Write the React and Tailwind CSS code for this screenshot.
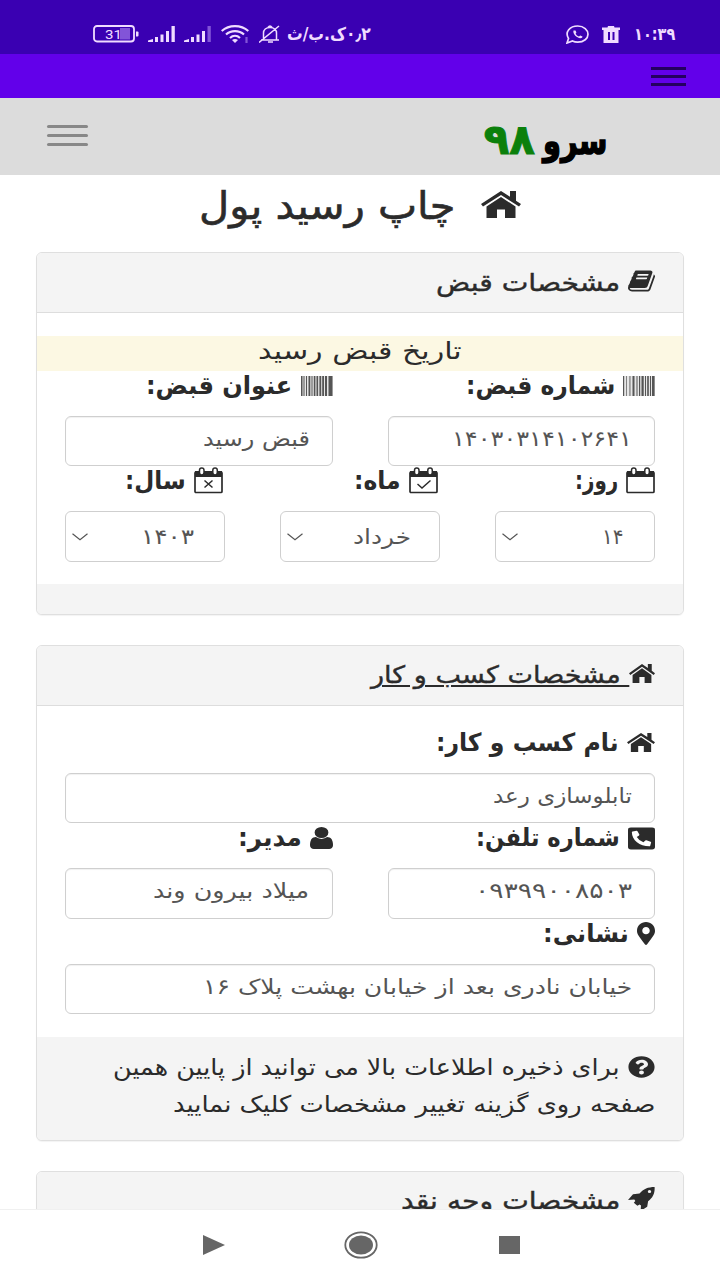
import { useLayoutEffect, useRef, useState } from "react";
import { FaHome, FaPhoneSquareAlt, FaMapMarkerAlt, FaQuestionCircle, FaWhatsapp } from "react-icons/fa";

/* One line of text, condensed or widened to a given measure. */
function Fit({ w, className = "", children }) {
  const ref = useRef(null);
  const [scale, setScale] = useState(1);
  useLayoutEffect(() => {
    setScale(w / ref.current.offsetWidth);
  }, [w]);
  return (
    <span className="block shrink-0" style={{ width: w }}>
      <span
        ref={ref}
        className={`block w-max origin-right whitespace-nowrap ${className}`}
        style={{ transform: `scaleX(${scale})` }}
      >
        {children}
      </span>
    </span>
  );
}

function Home({ className }) {
  return (
    <svg viewBox="0 0 40 27" preserveAspectRatio="none" fill="currentColor" className={className}>
      <path d="M20 0 0 13l2 2.500L20 4l18 11.500 2-2.500-5-3.300V0h-6v5.800z" />
      <path d="M20 6 5.500 15.500V27H16v-8.500h8V27h10.500V15.500z" />
    </svg>
  );
}

function Book({ className }) {
  return (
    <svg viewBox="0 100 1664 1600" preserveAspectRatio="none" fill="currentColor" className={className}>
      <path d="M1639 478q40 57 18 129l-275 906q-19 64-76.500 107.500T1183 1664H260q-77 0-148.500-53.500T12 1479q-24-67-2-127 0-4 3-27t4-37q1-8-3-21.500t-3-19.500q2-11 8-21t16.500-23.500T52 1179q23-38 45-91.500t30-91.500q3-10 .5-30t-.5-28q3-11 17-28t17-23q21-36 42-92t25-90q1-9-2.500-32t.5-28q4-13 22-30.500t22-22.500q19-26 42.500-84.500T340 411q1-8-3-25.500t-2-26.500q2-8 9-18t18-23 17-21q8-12 16.500-30.500t15-35 16-36 19.500-32T472.500 139.500t36-11.500 47.500 5.500l-1 3q38-9 51-9h761q74 0 114 56t18 130l-274 906q-36 119-71.500 153.500T1025 1408H156q-27 0-38 15-11 16-1 43 24 70 144 70h923q29 0 56-15.500t35-41.500l300-987q7-22 5-57 38 15 59 43zm-1064 2q-4 13 2 22.500t20 9.500h608q13 0 25.500-9.500t16.500-22.500l21-64q4-13-2-22.500t-20-9.500H638q-13 0-25.500 9.500T596 416zm-83 256q-4 13 2 22.500t20 9.500h608q13 0 25.500-9.500t16.500-22.500l21-64q4-13-2-22.500t-20-9.500H555q-13 0-25.500 9.500T513 672z" />
    </svg>
  );
}

function User({ className }) {
  return (
    <svg viewBox="0 128 1280 1536" preserveAspectRatio="none" fill="currentColor" className={className}>
      <path d="M1280 1399q0 109-62.500 187t-150.500 78H213q-88 0-150.500-78T0 1399q0-85 8.500-160.500t31.500-152 58.500-131 94-89T327 832q131 128 313 128t313-128q76 0 134.500 34.500t94 89 58.500 131 31.500 152 8.500 160.500zm-256-887q0 159-112.500 271.500T640 896 368.500 783.500 256 512t112.500-271.500T640 128t271.500 112.500T1024 512z" />
    </svg>
  );
}

function Rocket({ className }) {
  return (
    <svg viewBox="0 0 27 24" fill="currentColor" className={className}>
      <path fillRule="evenodd" d="M26.600 0C20 0 15.500 2 11.500 6.500L5 7.300 0 13l6.300-.4 1 1.300-1.500 1.800 3.600 3.100 2.200-1.300 1.400 1-.4 5.500 6.600-4.300.9-5.400C25 10.500 27 6 26.600 0ZM21.500 3a1.700 1.500 0 1 1 0 3 1.700 1.500 0 0 1 0-3Z" />
    </svg>
  );
}

function Barcode({ sparse }) {
  const bars = sparse
    ? [[0, 1.2], [3, 0.7], [6.500, 0.9], [9.500, 2], [13.500, 1], [16, 1.2], [18.500, 2.2], [22, 1], [24.200, 1.600], [27, 1], [29, 2.600]]
    : [[0, 1.500], [2.500, 1], [5, 1], [7.500, 1.800], [10.500, 1], [12.800, 1.600], [15.500, 1.600], [18.400, 1.800], [21.200, 1.800], [24, 2], [27.500, 4]];
  return (
    <svg viewBox="0 0 32 20" className="h-5 w-8 shrink-0" fill="#555">
      <rect width="32" height="20" fill="#e6e6e6" />
      {bars.map(([x, w]) => (
        <rect key={x} x={x} y="0" width={w} height="20" />
      ))}
    </svg>
  );
}

function Calendar({ mark }) {
  return (
    <svg viewBox="0 0 29 27" className="mb-0.5 h-[27px] w-[29px] shrink-0" fill="none" stroke="#2b2b2b">
      <rect x="1" y="5" width="27" height="20.500" rx="1" strokeWidth="1.700" />
      <path d="M1 4h27v6H1z" fill="#2b2b2b" stroke="none" />
      <rect x="5.500" y="1" width="4.500" height="7" rx="2.200" fill="#fff" strokeWidth="1.500" />
      <rect x="18.800" y="1" width="4.500" height="7" rx="2.200" fill="#fff" strokeWidth="1.500" />
      {mark === "check" && <path d="m8.500 17 4.500 4 8.500-7.500" strokeWidth="1.500" />}
      {mark === "x" && <path d="m10.500 13.500 8 7m0-7-8 7" strokeWidth="1.500" />}
    </svg>
  );
}

function Label({ icon, w, children }) {
  return (
    <div className="flex h-[45px] items-start gap-2">
      <div className="flex h-[30px] items-center">{icon}</div>
      <Fit w={w} className="text-[25px] leading-[30px] font-bold">{children}</Fit>
    </div>
  );
}

function Field({ w, children }) {
  return (
    <div className="flex h-[50.400px] items-center rounded-md border-[1.500px] border-[#cfcfcf] bg-white pr-[22px] pb-1 text-[#555] shadow-[inset_0_1px_1px_rgba(0,0,0,0.06)]">
      <Fit w={w} className="text-[21px] leading-[34px]">{children}</Fit>
    </div>
  );
}

function Select({ w, pad = "pr-[30px]", children }) {
  return (
    <div className={`flex h-[50.400px] items-center justify-between rounded-md border-[1.500px] border-[#cfcfcf] bg-white pl-1.5 text-[#555] ${pad}`}>
      <Fit w={w} className="text-[21px] leading-[34px]">{children}</Fit>
      <svg viewBox="0 0 16 8" className="h-2 w-4" fill="none" stroke="#555" strokeWidth="1.200">
        <path d="M.5.700 8 6.700 15.500.700" />
      </svg>
    </div>
  );
}

function Card({ icon, title, footer, children }) {
  return (
    <section className="overflow-hidden rounded-md border-[1.500px] border-[#dfdfdf] bg-white shadow-[0_1px_1px_rgba(0,0,0,0.05)]">
      <header className="flex h-[60px] items-center border-b border-[#ddd] bg-[#f4f4f4] pr-7 [-webkit-text-stroke:0.4px]">
        <div className="pb-1">{icon}</div>
        {title}
      </header>
      {children}
      {footer}
    </section>
  );
}

function Signal({ dim }) {
  return (
    <svg viewBox="0 0 28 16" className="h-4 w-7" fill="#f0dcff">
      <path d="M0 16v-1.500L5 13v3z" />
      <path d="M7 11h3v5H7zM12.500 8.500h3V16h-3zM18 5h3v11h-3z" />
      <path d="M23.500 0h3.300v16h-3.300z" fill={dim ? "#8254d8" : "#f0dcff"} />
    </svg>
  );
}

function StatusBar() {
  return (
    <div dir="ltr" className="flex h-[54px] shrink-0 items-center bg-[#3a00b2] pt-3.5 pl-[93px] text-[#f0dcff]">
      <svg viewBox="0 0 46 18" className="h-[18px] w-[46px]">
        <rect x="1" y="1" width="40" height="15.500" rx="3" fill="none" stroke="#f0dcff" strokeWidth="1.800" />
        <rect x="27" y="3" width="10" height="11.500" fill="#8254d8" />
        <path d="M43 6.500h1.500a1 1 0 0 1 1 1v3a1 1 0 0 1-1 1H43z" fill="#f0dcff" />
        <text x="20.500" y="13.500" textAnchor="middle" fontSize="13" textLength="17" lengthAdjust="spacingAndGlyphs" fontFamily="Roboto, sans-serif" fill="#f0dcff">31</text>
      </svg>
      <div className="ml-[9px] flex gap-2">
        <Signal />
        <Signal dim />
      </div>
      <svg viewBox="0 0 28 18" className="ml-[9px] h-[18px] w-7" fill="none" stroke="#f0dcff" strokeWidth="2.200">
        <path d="M.7 6C8 -.5 20-.5 27.300 6M5 9.500c5-4.500 13-4.500 18 0M9 13c3-2.800 7-2.800 10 0" />
        <path d="m14 18-3-3q3-2 6 0z" fill="#f0dcff" stroke="none" />
        <path d="M25.500 12v6" stroke="#8254d8" />
      </svg>
      <svg viewBox="0 0 22 18" className="ml-2.5 h-[18px] w-[22px]" fill="none" stroke="#f0dcff" strokeWidth="1.500">
        <path d="M2 15h18M4.500 15V8c0-3 2.500-5.500 6.500-5.500S17.500 5 17.500 8v7M9 2.500q2-3 4 0M9 17h5M0 17.500 20 1" />
      </svg>
      <div dir="rtl" className="ml-1.5">
        <Fit w={84} className="text-[18px] leading-6 font-bold">۰٫۲ک.ب/ث</Fit>
      </div>
      <svg viewBox="0 0 23 19" className="ml-[195px] h-[19px] w-[23px]" fill="none" stroke="#f0dcff" strokeWidth="1.700">
        <path d="m1 18 1.500-4.500C-1.500 7 4 1 11.700 1 18 1 22 5 22 9.200s-4 8-10.300 8c-2 0-3.700-.4-5.200-1.200z" />
        <path d="M7.500 5.500C6.500 8.500 10.500 13 14.500 13.200c1.200 0 2-.7 2-1.700l-2.300-1-1.200 1c-1.500-.5-2.800-1.600-3.400-2.800l.8-1.200-.9-2z" fill="#f0dcff" stroke="none" />
      </svg>
      <svg viewBox="0 0 18 17" className="ml-[13px] h-[17px] w-[18px]" fill="#f0dcff">
        <path fillRule="evenodd" d="M0 1.500h5.500L6 0h6l.5 1.500H18V4H0zM1.500 4h15v13h-15zM6 6v8h2V6zm4.500 0v8h2V6z" />
      </svg>
      <div dir="rtl" className="ml-3.5">
        <Fit w={41} className="text-[17px] leading-6 font-bold">۱۰:۳۹</Fit>
      </div>
    </div>
  );
}

export default function App() {
  return (
    <div
      dir="rtl"
      className="flex h-[1280px] w-[720px] flex-col overflow-hidden bg-white font-['DejaVu_Sans',sans-serif] text-[#2b2b2b]"
    >
      <StatusBar />
      <div className="flex h-11 shrink-0 items-center bg-[#6200ea] pr-[34px]">
        <div className="flex w-[35px] flex-col gap-[5px]">
          <i className="h-[3px] bg-[#240060]" />
          <i className="h-[3px] bg-[#240060]" />
          <i className="h-[3px] bg-[#240060]" />
        </div>
      </div>
      <div className="flex h-[76.500px] shrink-0 items-center justify-between bg-[#dcdcdc] pr-[113px] pl-[47px]">
        <div className="flex items-center gap-2 pt-2 font-bold">
          <Fit w={64} className="pt-1 text-[37px] leading-[60px] font-bold text-black [-webkit-text-stroke:1.5px]">سرو</Fit>
          <Fit w={51} className="text-[42px] leading-[60px] font-bold text-[#0b800b] [-webkit-text-stroke:1px]">۹۸</Fit>
        </div>
        <div className="flex w-[41px] flex-col gap-1.5 pb-0.5">
          <i className="h-[3px] rounded bg-[#888]" />
          <i className="h-[3px] rounded bg-[#888]" />
          <i className="h-[3px] rounded bg-[#888]" />
        </div>
      </div>
      <main className="min-h-0 grow overflow-hidden">
        <h1 className="flex h-[77.500px] items-start justify-center gap-[25px] pt-2 [-webkit-text-stroke:0.6px]">
          <Home className="mt-2 h-[27px] w-10" />
          <Fit w={256} className="text-[38px] leading-[46px]">چاپ رسید پول</Fit>
        </h1>
        <div className="flex flex-col gap-[30px] px-9">
          <Card
            icon={<Book className="ml-2 h-[22px] w-[27px]" />}
            title={<Fit w={184} className="text-[24px] leading-9">مشخصات قبض</Fit>}
            footer={<footer className="h-[30px] bg-[#f4f4f4]" />}
          >
            <div className="pt-[23px] pb-[22px]">
              <div className="flex h-[35px] justify-center bg-[#fcf8e3]">
                <Fit w={204} className="text-[24px] leading-[30px]">تاریخ قبض رسید</Fit>
              </div>
              <div className="px-7">
                <div className="grid grid-cols-2 gap-[55px]">
                  <div>
                    <Label w={149} icon={<Barcode sparse />}>شماره قبض:</Label>
                    <Field w={180}>۱۴۰۳۰۳۱۴۱۰۲۶۴۱</Field>
                  </div>
                  <div>
                    <Label w={146} icon={<Barcode />}>عنوان قبض:</Label>
                    <Field w={107}>قبض رسید</Field>
                  </div>
                </div>
                <div className="grid grid-cols-3 gap-[55px]">
                  <div>
                    <Label w={43} icon={<Calendar />}>روز:</Label>
                    <Select w={22}>۱۴</Select>
                  </div>
                  <div>
                    <div className="pr-0.5">
                      <Label w={47} icon={<Calendar mark="check" />}>ماه:</Label>
                    </div>
                    <Select w={58} pad="pr-[28px]">خرداد</Select>
                  </div>
                  <div>
                    <div className="pr-0.5">
                      <Label w={61} icon={<Calendar mark="x" />}>سال:</Label>
                    </div>
                    <Select w={53}>۱۴۰۳</Select>
                  </div>
                </div>
              </div>
            </div>
          </Card>
          <Card
            icon={<Home className="h-[19px] w-[26px]" />}
            title={
              <Fit w={258} className="text-[24px] leading-9 underline decoration-2 underline-offset-[2px]">
                &nbsp;مشخصات کسب و کار
              </Fit>
            }
            footer={
              <footer className="flex h-[103px] flex-col bg-[#f4f4f4] pt-3 pr-7">
                <div className="flex h-[37px] items-center gap-2">
                  <FaQuestionCircle preserveAspectRatio="none" className="h-[22px] w-[27px]" />
                  <Fit w={507} className="text-[23px] leading-[37px]">برای ذخیره اطلاعات بالا می توانید از پایین همین</Fit>
                </div>
                <Fit w={482} className="text-[23px] leading-[37px]">صفحه روی گزینه تغییر مشخصات کلیک نمایید</Fit>
              </footer>
            }
          >
            <div className="px-7 pt-[22px] pb-[23px]">
              <Label w={183} icon={<Home className="h-[19px] w-[28px]" />}>نام کسب و کار:</Label>
              <Field w={139}>تابلوسازی رعد</Field>
              <div className="grid grid-cols-2 gap-[55px]">
                <div>
                  <Label w={144} icon={<FaPhoneSquareAlt preserveAspectRatio="none" className="h-[25px] w-[27px]" />}>شماره تلفن:</Label>
                  <Field w={157}>۰۹۳۹۹۰۰۸۵۰۳</Field>
                </div>
                <div>
                  <Label w={64} icon={<User className="h-[22px] w-[23px]" />}>مدیر:</Label>
                  <Field w={156}>میلاد بیرون وند</Field>
                </div>
              </div>
              <Label w={86} icon={<FaMapMarkerAlt preserveAspectRatio="none" className="h-[23px] w-[18px]" />}>نشانی:</Label>
              <Field w={429}>خیابان نادری بعد از خیابان بهشت پلاک ۱۶</Field>
            </div>
          </Card>
          <Card
            icon={<Rocket className="ml-2 h-6 w-[27px]" />}
            title={<Fit w={219} className="text-[24px] leading-9">مشخصات وجه نقد</Fit>}
          />
        </div>
      </main>
      <nav dir="ltr" className="flex h-[71px] shrink-0 items-center border-t border-[#f0f0f0] bg-white pl-[203px] text-[#666]">
        <svg viewBox="0 0 22 20" className="h-5 w-[22px]" fill="currentColor">
          <path d="M0 0v20l22-10z" />
        </svg>
        <svg viewBox="0 0 34 28" className="ml-[119px] h-7 w-[34px]">
          <ellipse cx="17" cy="14" rx="15.700" ry="12.700" fill="none" stroke="currentColor" strokeWidth="1.800" />
          <ellipse cx="17" cy="14" rx="12" ry="9.500" fill="currentColor" />
        </svg>
        <div className="ml-[121px] h-[18px] w-[21px] bg-current" />
      </nav>
    </div>
  );
}
